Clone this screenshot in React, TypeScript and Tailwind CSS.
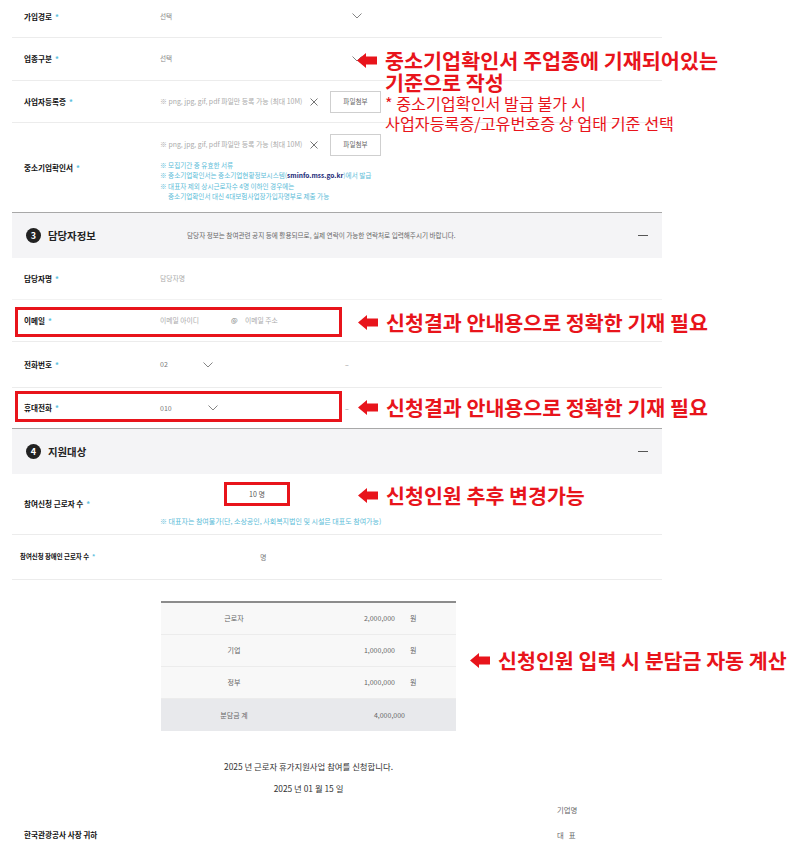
import React from 'react'

const FONT = "font-['Noto_Sans_CJK_KR','Noto_Sans',sans-serif]"

function Arrow() {
  return (
    <svg width="20" height="15" viewBox="0 0 20 15" className="shrink-0">
      <polygon points="0,7.5 9,0 9,3.6 20,3.6 20,11.4 9,11.4 9,15" fill="#e8141b" />
    </svg>
  )
}

function Chevron() {
  return (
    <svg width="10" height="6" viewBox="0 0 10 6" className="shrink-0">
      <polyline points="0.5,0.5 5,5 9.5,0.5" fill="none" stroke="#777" strokeWidth="0.9" />
    </svg>
  )
}

function XIcon() {
  return (
    <svg width="8" height="8" viewBox="0 0 8 8" className="shrink-0">
      <path d="M0.5 0.5 L7.5 7.5 M7.5 0.5 L0.5 7.5" stroke="#666" strokeWidth="0.9" />
    </svg>
  )
}

function Label({ children, small }: { children: React.ReactNode; small?: boolean }) {
  return (
    <div className={small ? 'w-[148px] pl-2 text-[6.4px] font-bold text-[#111]' : 'w-[148px] pl-3 text-[7.6px] font-bold text-[#111]'}>
      {children}
      <span className="ml-[3px] text-[#5bc0de]">*</span>
    </div>
  )
}

function FileField() {
  return (
    <div className="flex items-center">
      <span className="w-[143px] text-[6.9px] text-[#aaa] whitespace-nowrap">※ png, jpg, gif, pdf 파일만 등록 가능 (최대 10M)</span>
      <span className="ml-[7px]"><XIcon /></span>
      <div className="ml-[12px] w-[51px] h-[22px] border border-[#cfcfcf] flex items-center justify-center text-[6.6px] text-[#666]">
        파일첨부
      </div>
    </div>
  )
}

function SectionHeader({ num, title, notice }: { num: string; title: string; notice?: string }) {
  return (
    <div className="flex items-center bg-[#f4f4f6] border-t border-[#a8a8a8] px-[14px] h-[46px]">
      <div className="w-[15px] h-[15px] rounded-full bg-[#222] text-white text-[9px] font-bold flex items-center justify-center leading-none">
        {num}
      </div>
      <div className="ml-[7px] text-[10.4px] font-bold text-[#222] w-[52px] whitespace-nowrap">{title}</div>
      {notice && <div className="ml-[87px] text-[6.6px] text-[#666] whitespace-nowrap">{notice}</div>}
      <div className="ml-auto w-[10px] h-px bg-[#555]" />
    </div>
  )
}

export default function App() {
  const tableRows = [
    { label: '근로자', value: '2,000,000' },
    { label: '기업', value: '1,000,000' },
    { label: '정부', value: '1,000,000' },
  ]

  return (
    <div className={`relative w-[802px] h-[844px] overflow-hidden bg-white ${FONT}`}>
      <div className="ml-[12px] w-[650px]">
        {/* 가입경로 */}
        <div className="flex items-center h-[38px] pb-[4px] border-b border-[#ececec]">
          <Label>가입경로</Label>
          <div className="flex items-center justify-between w-[202px] text-[6.6px] text-[#888]">
            <span>선택</span>
            <Chevron />
          </div>
        </div>
        {/* 업종구분 */}
        <div className="flex items-center h-[43px] border-b border-[#ececec]">
          <Label>업종구분</Label>
          <div className="flex items-center justify-between w-[202px] text-[6.6px] text-[#888]">
            <span>선택</span>
            <Chevron />
          </div>
        </div>
        {/* 사업자등록증 */}
        <div className="flex items-center h-[42px] border-b border-[#ececec]">
          <Label>사업자등록증</Label>
          <FileField />
        </div>
        {/* 중소기업확인서 */}
        <div className="flex items-center h-[89px]">
          <Label>중소기업확인서</Label>
          <div className="flex flex-col">
            <FileField />
            <div className="mt-[4px] text-[6.6px] leading-[10.5px] text-[#5bbcd8] whitespace-nowrap">
              <div>※ 모집기간 중 유효한 서류</div>
              <div>
                ※ 중소기업확인서는 중소기업현황정보시스템(<span className="text-[#1b2a78] font-bold">sminfo.mss.go.kr</span>)에서 발급
              </div>
              <div>※ 대표자 제외 상시근로자수 4명 이하인 경우에는</div>
              <div className="pl-[8px]">중소기업확인서 대신 4대보험사업장가입자명부로 제출 가능</div>
            </div>
          </div>
        </div>

        <SectionHeader
          num="3"
          title="담당자정보"
          notice="담당자 정보는 참여관련 공지 등에 활용되므로, 실제 연락이 가능한 연락처로 입력해주시기 바랍니다."
        />

        {/* 담당자명 */}
        <div className="flex items-center h-[42px] border-b border-[#f2f2f2]">
          <Label>담당자명</Label>
          <span className="text-[6.8px] text-[#aaa]">담당자명</span>
        </div>
        {/* 이메일 */}
        <div className="flex items-center h-[42px] border-b border-[#ececec]">
          <Label>이메일</Label>
          <span className="w-[71px] text-[6.8px] text-[#aaa]">이메일 아이디</span>
          <span className="w-[14px] text-[7px] text-[#777]">@</span>
          <span className="text-[6.8px] text-[#aaa]">이메일 주소</span>
        </div>
        {/* 전화번호 */}
        <div className="flex items-center h-[46px] border-b border-[#ececec]">
          <Label>전화번호</Label>
          <span className="w-[43px] text-[7px] text-[#777]">02</span>
          <Chevron />
          <span className="ml-[132px] text-[7px] text-[#888]">–</span>
        </div>
        {/* 휴대전화 */}
        <div className="flex items-center h-[40px]">
          <Label>휴대전화</Label>
          <span className="w-[48px] text-[7px] text-[#777]">010</span>
          <Chevron />
          <span className="ml-[127px] text-[7px] text-[#888]">–</span>
        </div>

        <SectionHeader num="4" title="지원대상" />

        {/* 참여신청 근로자 수 */}
        <div className="flex items-center h-[61px] border-b border-[#ececec]">
          <Label>참여신청 근로자 수</Label>
          <div className="flex flex-col">
            <div className="ml-[64px] w-[66px] h-[24px] flex items-center justify-center text-[7px] text-[#555]">
              10 명
            </div>
            <div className="mt-[9px] text-[7px] leading-[10px] text-[#5bbcd8] whitespace-nowrap">
              ※ 대표자는 참여불가(단, 소상공인, 사회복지법인 및 시설은 대표도 참여가능)
            </div>
          </div>
        </div>
        {/* 참여신청 장애인 근로자 수 */}
        <div className="flex items-center h-[45px] border-b border-[#ececec]">
          <Label small>참여신청 장애인 근로자 수</Label>
          <span className="ml-[100px] text-[7px] text-[#777]">명</span>
        </div>

        {/* 분담금 표 */}
        <div className="mt-[21px] ml-[149px] w-[295px] border-t-[2px] border-[#8c8c8c] text-[7px] text-[#666]">
          {tableRows.map(r => (
            <div key={r.label} className="flex items-center h-[32px] bg-[#f8f8f8] border-b border-[#ececec]">
              <div className="w-[146px] text-center">{r.label}</div>
              <div className="w-[88px] text-right">{r.value}</div>
              <div className="ml-[15px]">원</div>
            </div>
          ))}
          <div className="flex items-center h-[32px] bg-[#e8e9ec]">
            <div className="w-[146px] text-center">분담금 계</div>
            <div className="w-[98px] text-right">4,000,000</div>
          </div>
        </div>

        {/* 신청 문구 */}
        <div className="mt-[29px] ml-[149px] w-[295px] text-center text-[8.4px] leading-[12px] text-[#333]">
          2025 년 근로자 휴가지원사업 참여를 신청합니다.
        </div>
        <div className="mt-[10px] ml-[149px] w-[295px] text-center text-[8.4px] leading-[12px] text-[#333]">
          2025 년 01 월 15 일
        </div>
        <div className="mt-[10px] pl-[545px] text-[7.4px] leading-[12px] text-[#666]">기업명</div>
        <div className="mt-[13px] flex items-center leading-[12px]">
          <div className="w-[545px] pl-3 text-[7.6px] font-bold text-[#111]">한국관광공사 사장 귀하</div>
          <div className="text-[7.4px] text-[#666]">대&nbsp;&nbsp;&nbsp;표</div>
        </div>
      </div>

      {/* 강조 박스 */}
      <div className="absolute left-[15px] top-[307px] w-[327px] h-[30px] border-[3px] border-[#e8141b]" />
      <div className="absolute left-[15px] top-[391px] w-[327px] h-[31px] border-[3px] border-[#e8141b]" />
      <div className="absolute left-[224px] top-[482px] w-[66px] h-[24px] border-[3px] border-[#e8141b]" />

      {/* 안내 주석 */}
      <div className="absolute left-[357px] top-[49px] flex items-start text-[#e8141b]">
        <div className="mt-[4px]"><Arrow /></div>
        <div className="ml-[8px] whitespace-nowrap">
          <div className="text-[20.7px] font-bold leading-[22px]">
            중소기업확인서 주업종에 기재되어있는
            <br />
            기준으로 작성
          </div>
          <div className="text-[16.2px] leading-[20px]">
            * 중소기업확인서 발급 불가 시
            <br />
            사업자등록증/고유번호증 상 업태 기준 선택
          </div>
        </div>
      </div>

      <div className="absolute left-[358px] top-[310px] h-[24px] flex items-center gap-[8px] text-[#e8141b] text-[20.6px] font-bold whitespace-nowrap">
        <Arrow />
        <span>신청결과 안내용으로 정확한 기재 필요</span>
      </div>
      <div className="absolute left-[358px] top-[395px] h-[24px] flex items-center gap-[8px] text-[#e8141b] text-[20.6px] font-bold whitespace-nowrap">
        <Arrow />
        <span>신청결과 안내용으로 정확한 기재 필요</span>
      </div>
      <div className="absolute left-[358px] top-[483px] h-[24px] flex items-center gap-[8px] text-[#e8141b] text-[20.6px] font-bold whitespace-nowrap">
        <Arrow />
        <span>신청인원 추후 변경가능</span>
      </div>
      <div className="absolute left-[470px] top-[648px] h-[24px] flex items-center gap-[8px] text-[#e8141b] text-[20.6px] font-bold whitespace-nowrap">
        <Arrow />
        <span>신청인원 입력 시 분담금 자동 계산</span>
      </div>
    </div>
  )
}
